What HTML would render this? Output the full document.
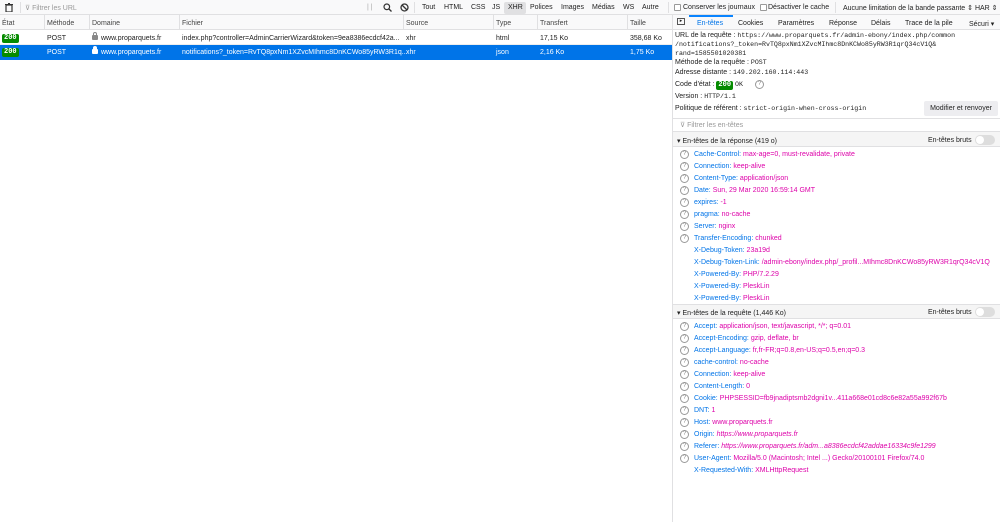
<!DOCTYPE html>
<html><head><meta charset="utf-8"><style>
*{margin:0;padding:0;box-sizing:border-box}
body{width:1000px;height:522px;overflow:hidden;background:#fff;font-family:"Liberation Sans",sans-serif;font-size:7px;color:#222;position:relative}
.a{position:absolute;white-space:nowrap}
.m{font-family:"Liberation Mono",monospace;font-size:6.6px}
.k{color:#0074e8}.v{color:#dd00a9}
.q{position:absolute;width:9px;height:9px;border:1px solid #999;border-radius:50%;font-size:6px;line-height:7px;text-align:center;color:#888}
.s200{display:inline-block;background:#058b00;color:#fff;font-family:"Liberation Mono",monospace;font-weight:bold;padding:0 2px;border-radius:2px;line-height:9px;font-size:7px}
.vl{position:absolute;width:1px;background:#e0e0e2}
.hl{position:absolute;height:1px;background:#e0e0e2}
.tog{position:absolute;width:20px;height:10px;border-radius:5px;background:#ddd}
.tog:after{content:"";position:absolute;left:1px;top:1px;width:8px;height:8px;border-radius:50%;background:#fff}
.lk{display:inline-block;width:6px;height:5px;background:#888;border-radius:1px;position:relative;margin-right:3px;vertical-align:0}
.lk:before{content:"";position:absolute;left:1px;top:-3px;width:2px;height:3px;border:1px solid #888;border-bottom:none;border-radius:2px 2px 0 0}
.lw,.lw:before{background:#fff;border-color:#fff}
</style></head><body>
<div class="a" style="left:0;top:0;width:1000px;height:15px;background:#f9f9fa;border-bottom:1px solid #e0e0e2"></div>
<svg class="a" style="left:5px;top:3px" width="8" height="9"><rect x="1" y="2" width="6" height="7" fill="none" stroke="#333" stroke-width="1.2"/><rect x="0" y="1" width="8" height="1" fill="#333"/><rect x="3" y="0" width="2" height="1" fill="#333"/></svg>
<div class="vl" style="left:20px;top:2px;height:11px"></div>
<div class="a" style="left:25px;top:4px;color:#999">⊽ Filtrer les URL</div>
<div class="a" style="left:367px;top:4px;color:#aaa">| |</div>
<svg class="a" style="left:383px;top:3px" width="9" height="9"><circle cx="3.8" cy="3.8" r="2.8" fill="none" stroke="#333" stroke-width="1.2"/><line x1="6" y1="6" x2="8.5" y2="8.5" stroke="#333" stroke-width="1.3"/></svg>
<svg class="a" style="left:400px;top:3px" width="9" height="9"><circle cx="4.5" cy="4.5" r="3.5" fill="none" stroke="#333" stroke-width="1.3"/><line x1="2" y1="2" x2="7" y2="7" stroke="#333" stroke-width="1.3"/></svg>
<div class="vl" style="left:414px;top:2px;height:11px"></div>
<div class="a" style="left:422px;top:4px">Tout</div>
<div class="a" style="left:444px;top:4px">HTML</div>
<div class="a" style="left:471px;top:4px">CSS</div>
<div class="a" style="left:492px;top:4px">JS</div>
<div class="a" style="left:504px;top:2px;width:22px;height:12px;background:#e0e0e2;border-radius:2px"></div>
<div class="a" style="left:508px;top:4px">XHR</div>
<div class="a" style="left:530px;top:4px">Polices</div>
<div class="a" style="left:561px;top:4px">Images</div>
<div class="a" style="left:592px;top:4px">Médias</div>
<div class="a" style="left:623px;top:4px">WS</div>
<div class="a" style="left:642px;top:4px">Autre</div>
<div class="vl" style="left:668px;top:2px;height:11px"></div>
<div class="a" style="left:674px;top:4px;width:7px;height:7px;border:1px solid #999;border-radius:1px;background:#fff"></div>
<div class="a" style="left:683px;top:4px">Conserver les journaux</div>
<div class="a" style="left:760px;top:4px;width:7px;height:7px;border:1px solid #999;border-radius:1px;background:#fff"></div>
<div class="a" style="left:768px;top:4px">Désactiver le cache</div>
<div class="vl" style="left:835px;top:2px;height:11px"></div>
<div class="a" style="left:843px;top:4px">Aucune limitation de la bande passante ⇕ HAR ⇕</div>
<div class="a" style="left:0;top:15px;width:672px;height:15px;background:#f9f9fa;border-bottom:1px solid #e0e0e2"></div>
<div class="a" style="left:2px;top:20px;color:#444">État</div>
<div class="a" style="left:47px;top:20px;color:#444">Méthode</div>
<div class="a" style="left:92px;top:20px;color:#444">Domaine</div>
<div class="a" style="left:182px;top:20px;color:#444">Fichier</div>
<div class="a" style="left:406px;top:20px;color:#444">Source</div>
<div class="a" style="left:496px;top:20px;color:#444">Type</div>
<div class="a" style="left:540px;top:20px;color:#444">Transfert</div>
<div class="a" style="left:630px;top:20px;color:#444">Taille</div>
<div class="vl" style="left:44px;top:15px;height:15px"></div><div class="vl" style="left:89px;top:15px;height:15px"></div><div class="vl" style="left:179px;top:15px;height:15px"></div><div class="vl" style="left:403px;top:15px;height:15px"></div><div class="vl" style="left:493px;top:15px;height:15px"></div><div class="vl" style="left:537px;top:15px;height:15px"></div><div class="vl" style="left:627px;top:15px;height:15px"></div>
<div class="a" style="left:0;top:30px;width:672px;height:15px;border-bottom:1px solid #eee"></div>
<div class="a" style="left:2px;top:34px"><span class="s200">200</span></div>
<div class="a" style="left:47px;top:35px">POST</div>
<div class="a" style="left:92px;top:35px"><span class="lk"></span>www.proparquets.fr</div>
<div class="a" style="left:182px;top:35px">index.php?controller=AdminCarrierWizard&amp;token=9ea8386ecdcf42a...</div>
<div class="a" style="left:406px;top:35px">xhr</div>
<div class="a" style="left:496px;top:35px">html</div>
<div class="a" style="left:540px;top:35px">17,15 Ko</div>
<div class="a" style="left:630px;top:35px">358,68 Ko</div>
<div class="a" style="left:0;top:45px;width:672px;height:15px;background:#0074e8"></div>
<div class="a" style="left:2px;top:48px"><span class="s200">200</span></div>
<div class="a" style="left:47px;top:49px;color:#fff">POST</div>
<div class="a" style="left:92px;top:49px;color:#fff"><span class="lk lw"></span>www.proparquets.fr</div>
<div class="a" style="left:182px;top:49px;color:#fff">notifications?_token=RvTQ8pxNm1XZvcMIhmc8DnKCWo85yRW3R1q...</div>
<div class="a" style="left:406px;top:49px;color:#fff">xhr</div>
<div class="a" style="left:496px;top:49px;color:#fff">json</div>
<div class="a" style="left:540px;top:49px;color:#fff">2,16 Ko</div>
<div class="a" style="left:630px;top:49px;color:#fff">1,75 Ko</div>
<div class="vl" style="left:672px;top:15px;height:507px"></div>
<div class="a" style="left:673px;top:15px;width:327px;height:15px;background:#f9f9fa;border-bottom:1px solid #e0e0e2"></div>
<div class="a" style="left:689px;top:15px;width:44px;height:2px;background:#0a84ff"></div>
<div class="a" style="left:677px;top:18px;width:8px;height:7px;border:1px solid #555;font-size:5px;line-height:5px;text-align:center">▸</div>
<div class="a" style="left:697px;top:20px;color:#0074e8">En-têtes</div>
<div class="a" style="left:738px;top:20px">Cookies</div>
<div class="a" style="left:778px;top:20px">Paramètres</div>
<div class="a" style="left:829px;top:20px">Réponse</div>
<div class="a" style="left:871px;top:20px">Délais</div>
<div class="a" style="left:905px;top:20px">Trace de la pile</div>
<div class="a" style="left:969px;top:20px">Sécuri ▾</div>
<div class="a" style="left:675px;top:32px">URL de la requête : <span class="m">https://www.proparquets.fr/admin-ebony/index.php/common</span></div>
<div class="a m" style="left:675px;top:41px">/notifications?_token=RvTQ8pxNm1XZvcMIhmc8DnKCWo85yRW3R1qrQ34cV1Q&amp;</div>
<div class="a m" style="left:675px;top:50px">rand=1585501020381</div>
<div class="a" style="left:675px;top:59px">Méthode de la requête : <span class="m">POST</span></div>
<div class="a" style="left:675px;top:69px">Adresse distante : <span class="m">149.202.160.114:443</span></div>
<div class="a" style="left:675px;top:81px">Code d'état : <span class="s200">200</span> <span class="m">OK</span></div>
<div class="q" style="left:755px;top:80px">?</div>
<div class="a" style="left:675px;top:93px">Version : <span class="m">HTTP/1.1</span></div>
<div class="a" style="left:675px;top:105px">Politique de référent : <span class="m">strict-origin-when-cross-origin</span></div>
<div class="a" style="left:924px;top:101px;width:74px;height:15px;background:#ededf0;border-radius:2px;text-align:center;line-height:15px">Modifier et renvoyer</div>
<div class="hl" style="left:673px;top:118px;width:327px"></div>
<div class="a" style="left:680px;top:121px;color:#999">⊽ Filtrer les en-têtes</div>
<div class="hl" style="left:673px;top:131px;width:327px"></div>
<div class="a" style="left:673px;top:132px;width:327px;height:15px;background:#f5f5f5;border-bottom:1px solid #e0e0e2"></div>
<div class="a" style="left:677px;top:137px">▾ En-têtes de la réponse (419 o)</div>
<div class="a" style="left:928px;top:137px">En-têtes bruts</div>
<div class="tog" style="left:975px;top:135px"></div>
<div class="a" style="left:673px;top:304px;width:327px;height:15px;background:#f5f5f5;border-top:1px solid #e0e0e2;border-bottom:1px solid #e0e0e2"></div>
<div class="a" style="left:677px;top:309px">▾ En-têtes de la requête (1,446 Ko)</div>
<div class="a" style="left:928px;top:309px">En-têtes bruts</div>
<div class="tog" style="left:975px;top:307px"></div>

<div class="q" style="left:680px;top:150px">?</div><div class="a" style="left:694px;top:151px"><span class="k">Cache-Control:</span> <span class="v">max-age=0, must-revalidate, private</span></div>
<div class="q" style="left:680px;top:162px">?</div><div class="a" style="left:694px;top:163px"><span class="k">Connection:</span> <span class="v">keep-alive</span></div>
<div class="q" style="left:680px;top:174px">?</div><div class="a" style="left:694px;top:175px"><span class="k">Content-Type:</span> <span class="v">application/json</span></div>
<div class="q" style="left:680px;top:186px">?</div><div class="a" style="left:694px;top:187px"><span class="k">Date:</span> <span class="v">Sun, 29 Mar 2020 16:59:14 GMT</span></div>
<div class="q" style="left:680px;top:198px">?</div><div class="a" style="left:694px;top:199px"><span class="k">expires:</span> <span class="v">-1</span></div>
<div class="q" style="left:680px;top:210px">?</div><div class="a" style="left:694px;top:211px"><span class="k">pragma:</span> <span class="v">no-cache</span></div>
<div class="q" style="left:680px;top:222px">?</div><div class="a" style="left:694px;top:223px"><span class="k">Server:</span> <span class="v">nginx</span></div>
<div class="q" style="left:680px;top:234px">?</div><div class="a" style="left:694px;top:235px"><span class="k">Transfer-Encoding:</span> <span class="v">chunked</span></div>
<div class="a" style="left:694px;top:247px"><span class="k">X-Debug-Token:</span> <span class="v">23a19d</span></div>
<div class="a" style="left:694px;top:259px"><span class="k">X-Debug-Token-Link:</span> <span class="v">/admin-ebony/index.php/_profil...MIhmc8DnKCWo85yRW3R1qrQ34cV1Q</span></div>
<div class="a" style="left:694px;top:271px"><span class="k">X-Powered-By:</span> <span class="v">PHP/7.2.29</span></div>
<div class="a" style="left:694px;top:283px"><span class="k">X-Powered-By:</span> <span class="v">PleskLin</span></div>
<div class="a" style="left:694px;top:295px"><span class="k">X-Powered-By:</span> <span class="v">PleskLin</span></div>

<div class="q" style="left:680px;top:322px">?</div><div class="a" style="left:694px;top:323px"><span class="k">Accept:</span> <span class="v">application/json, text/javascript, */*; q=0.01</span></div>
<div class="q" style="left:680px;top:334px">?</div><div class="a" style="left:694px;top:335px"><span class="k">Accept-Encoding:</span> <span class="v">gzip, deflate, br</span></div>
<div class="q" style="left:680px;top:346px">?</div><div class="a" style="left:694px;top:347px"><span class="k">Accept-Language:</span> <span class="v">fr,fr-FR;q=0.8,en-US;q=0.5,en;q=0.3</span></div>
<div class="q" style="left:680px;top:358px">?</div><div class="a" style="left:694px;top:359px"><span class="k">cache-control:</span> <span class="v">no-cache</span></div>
<div class="q" style="left:680px;top:370px">?</div><div class="a" style="left:694px;top:371px"><span class="k">Connection:</span> <span class="v">keep-alive</span></div>
<div class="q" style="left:680px;top:382px">?</div><div class="a" style="left:694px;top:383px"><span class="k">Content-Length:</span> <span class="v">0</span></div>
<div class="q" style="left:680px;top:394px">?</div><div class="a" style="left:694px;top:395px"><span class="k">Cookie:</span> <span class="v">PHPSESSID=fb9jnadiptsmb2dgni1v...411a668e01cd8c6e82a55a992f67b</span></div>
<div class="q" style="left:680px;top:406px">?</div><div class="a" style="left:694px;top:407px"><span class="k">DNT:</span> <span class="v">1</span></div>
<div class="q" style="left:680px;top:418px">?</div><div class="a" style="left:694px;top:419px"><span class="k">Host:</span> <span class="v">www.proparquets.fr</span></div>
<div class="q" style="left:680px;top:430px">?</div><div class="a" style="left:694px;top:431px"><span class="k">Origin:</span> <span class="v"><i>https://www.proparquets.fr</i></span></div>
<div class="q" style="left:680px;top:442px">?</div><div class="a" style="left:694px;top:443px"><span class="k">Referer:</span> <span class="v"><i>https://www.proparquets.fr/adm...a8386ecdcf42addae16334c9fe1299</i></span></div>
<div class="q" style="left:680px;top:454px">?</div><div class="a" style="left:694px;top:455px"><span class="k">User-Agent:</span> <span class="v">Mozilla/5.0 (Macintosh; Intel ...) Gecko/20100101 Firefox/74.0</span></div>
<div class="a" style="left:694px;top:467px"><span class="k">X-Requested-With:</span> <span class="v">XMLHttpRequest</span></div>
</body></html>
